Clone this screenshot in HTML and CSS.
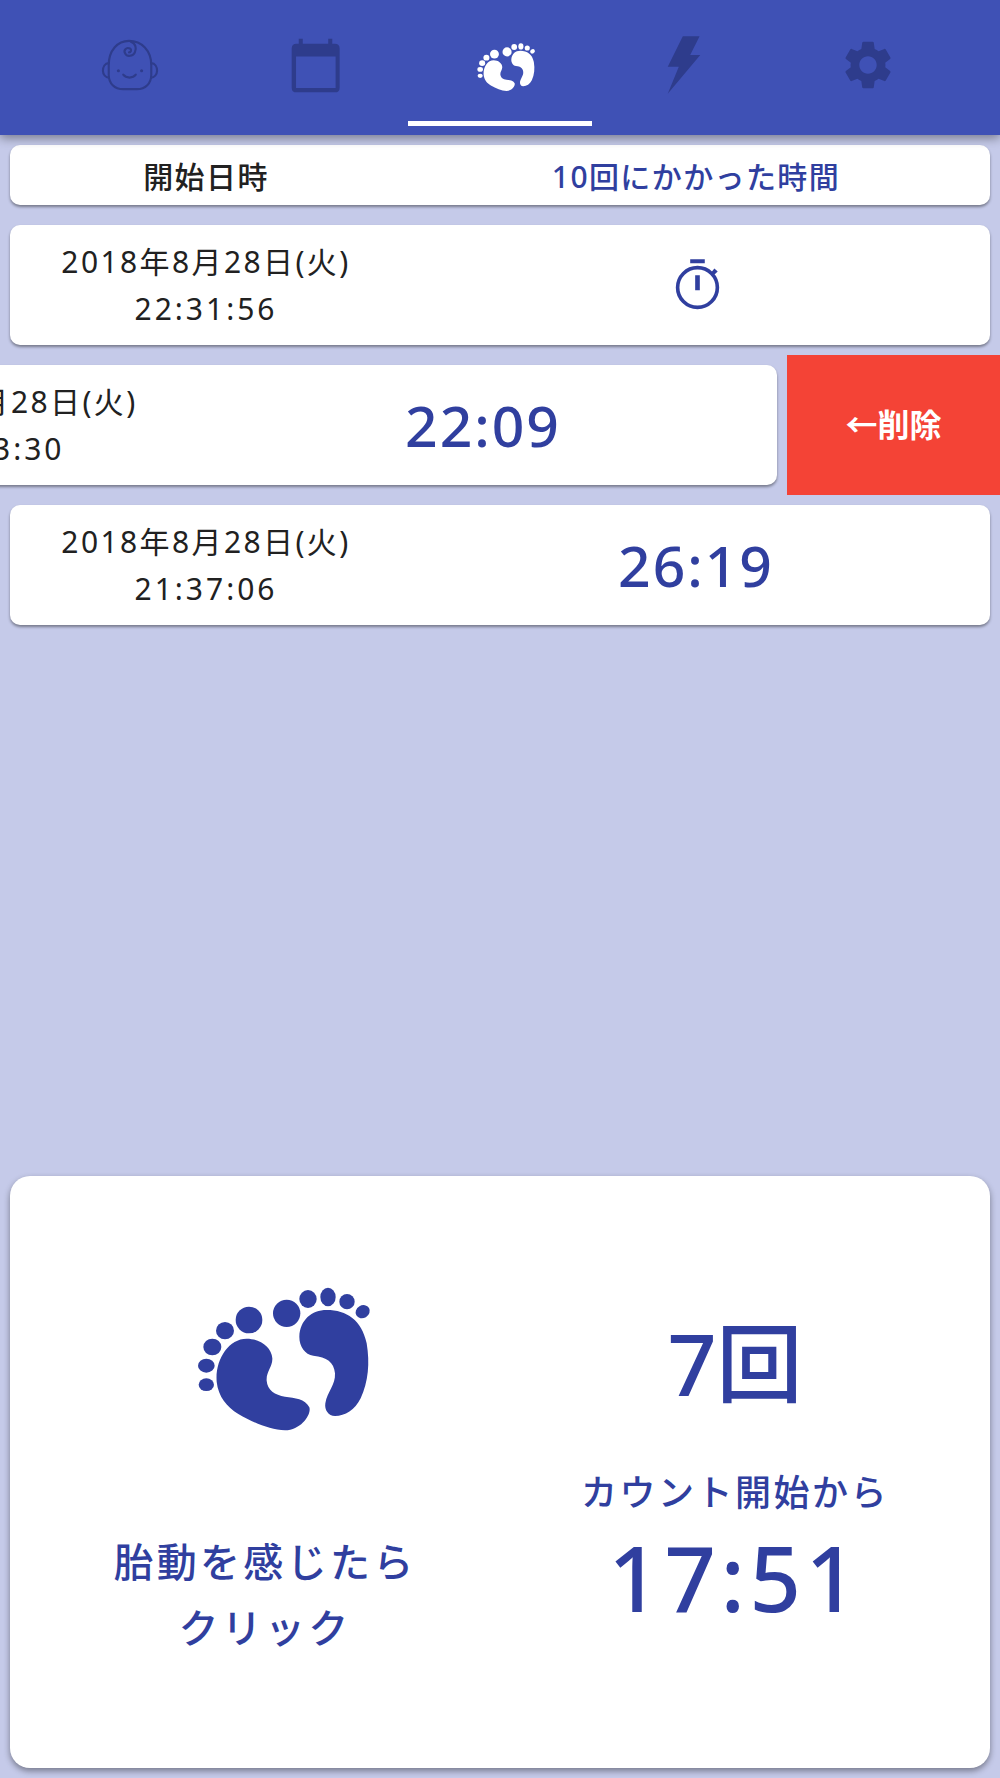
FILE: index.html
```html
<!DOCTYPE html>
<html lang="ja">

<head>
  <meta charset="UTF-8">
  <meta name="viewport" content="width=device-width, initial-scale=1.0">
  <title>胎動カウント</title>
  <link rel="stylesheet" href="styles.css">
</head>

<body>
  <svg class="defs" width="0" height="0">
    <symbol id="feet" viewBox="0 0 690 600">
      <path d="M230 236C270 236 305 262 307 295C308 320 288 335 290 362C292 390 315 405 345 410C375 415 405 415 418 442C425 462 395 510 345 511C300 510 250 488 205 462C170 440 145 410 140 365C135 300 175 236 230 236Z" />
      <path d="M470 150C530 150 575 180 590 250C600 310 595 365 572 415C555 450 525 468 495 468C475 468 463 450 466 430C472 395 497 375 495 340C492 305 470 292 430 287C405 283 388 260 388 230C390 180 425 150 470 150Z" />
      <circle cx="237" cy="180" r="40" />
      <ellipse cx="165" cy="212" rx="27" ry="26" />
      <ellipse cx="127" cy="261" rx="27" ry="25" />
      <ellipse cx="109" cy="317" rx="25" ry="21" />
      <ellipse cx="109" cy="374" rx="23" ry="19" />
      <circle cx="350" cy="160" r="41" />
      <ellipse cx="414" cy="117" rx="26" ry="27" />
      <ellipse cx="474" cy="111" rx="23" ry="28" />
      <ellipse cx="531" cy="125" rx="23" ry="23" />
      <ellipse cx="578" cy="155" rx="22" ry="19" transform="rotate(-30 578 155)" />
    </symbol>
  </svg>

  <div class="app">
    <nav class="tabs">
      <div class="tab">
        <svg class="icon-baby" viewBox="0 0 60 60" fill="none" stroke="currentColor" stroke-width="2.2" stroke-linecap="round">
          <path d="M29 5C42 5 52 15 52 30V40C52 49 46 55 37 55H23C14 55 8 49 8 40V30C8 15 17 5 29 5Z" />
          <path d="M8 28C4 28 2 32 2 36C2 40 5 43 8 43" />
          <path d="M52 28C56 28 58 32 58 36C58 40 55 43 52 43" />
          <path d="M31 6C36 8 37 13 35 17C33 21 27 22 25 18C23 15 26 11 30 13C32 14 31 17 29 17" />
          <path d="M23 40C26 44 33 44 36 40" />
          <circle cx="18" cy="36" r="1.6" fill="currentColor" stroke="none" />
          <circle cx="42" cy="36" r="1.6" fill="currentColor" stroke="none" />
        </svg>
      </div>
      <div class="tab">
        <svg class="icon-calendar" viewBox="630 50 155 170" fill="currentColor">
          <path fill-rule="evenodd" d="M656 55H668V70H744V55H756V70H764Q778 70 778 84V201Q778 215 764 215H649Q635 215 635 201V84Q635 70 649 70H656ZM648 108V202H766V108Z" />
        </svg>
      </div>
      <div class="tab active">
        <svg class="icon-feet" fill="currentColor"><use href="#feet" /></svg>
      </div>
      <div class="tab">
        <svg class="icon-bolt" viewBox="650 40 110 185" fill="currentColor">
          <path d="M700 47H750L722 103H752L655 218L688 138H655Z" />
        </svg>
      </div>
      <div class="tab">
        <svg class="icon-gear" viewBox="0 0 24 24" fill="currentColor">
          <path d="M19.14 12.94c.04-.3.06-.61.06-.94 0-.32-.02-.64-.07-.94l2.03-1.58c.18-.14.23-.41.12-.61l-1.92-3.32c-.12-.22-.37-.29-.59-.22l-2.39.96c-.5-.38-1.03-.7-1.62-.94l-.36-2.54c-.04-.24-.24-.41-.48-.41h-3.84c-.24 0-.43.17-.47.41l-.36 2.54c-.59.24-1.13.57-1.62.94l-2.39-.96c-.22-.08-.47 0-.59.22L2.74 8.87c-.12.21-.08.47.12.61l2.03 1.58c-.05.3-.09.63-.09.94s.02.64.07.94l-2.03 1.58c-.18.14-.23.41-.12.61l1.92 3.32c.12.22.37.29.59.22l2.39-.96c.5.38 1.03.7 1.62.94l.36 2.54c.05.24.24.41.48.41h3.84c.24 0 .44-.17.47-.41l.36-2.54c.59-.24 1.13-.56 1.62-.94l2.39.96c.22.08.47 0 .59-.22l1.92-3.32c.12-.22.07-.47-.12-.61l-2.01-1.58zM12 15.6c-1.98 0-3.6-1.62-3.6-3.6s1.62-3.6 3.6-3.6 3.6 1.62 3.6 3.6-1.62 3.6-3.6 3.6z" />
        </svg>
      </div>
    </nav>

    <main class="list">
      <div class="row">
        <div class="card card-head">
          <div class="col-date head-start">開始日時</div>
          <div class="col-time head-time">10回にかかった時間</div>
        </div>
      </div>

      <div class="row">
        <div class="card card-item">
          <div class="col-date date">2018年8月28日(火)<br><span class="clock">22:31:56</span></div>
          <div class="col-time time">
            <svg class="icon-timer" viewBox="95 50 140 160">
              <path class="timer-fill" d="M146 57H190V69H146ZM161 105H175V150H161ZM208 98L219 85L229 94L216 106Z" />
              <circle class="timer-ring" cx="168" cy="142" r="60" />
            </svg>
          </div>
        </div>
      </div>

      <div class="row swiped">
        <div class="delete">←削除</div>
        <div class="card card-item">
          <div class="col-date date">2018年8月28日(火)<br><span class="clock">22:03:30</span></div>
          <div class="col-time time">22:09</div>
        </div>
      </div>

      <div class="row">
        <div class="card card-item">
          <div class="col-date date">2018年8月28日(火)<br><span class="clock">21:37:06</span></div>
          <div class="col-time time">26:19</div>
        </div>
      </div>
    </main>

    <section class="counter">
      <div class="counter-left">
        <svg class="icon-feet-big" fill="currentColor"><use href="#feet" /></svg>
        <p class="counter-label">胎動を感じたら<br>クリック</p>
      </div>
      <div class="counter-right">
        <div class="count">7回</div>
        <div class="since">カウント開始から</div>
        <div class="elapsed">17:51</div>
      </div>
    </section>
  </div>
</body>

</html>
```

FILE: styles.css
```css
body {
  margin: 0;
  background-color: #c5cae9;
  font-family: "Noto Sans", "Noto Sans CJK JP", sans-serif;
  font-weight: 500;
  color: #212121;
}

.defs {
  position: absolute;
}

.app {
  display: flex;
  flex-direction: column;
  height: 100vh;
  overflow: hidden;
}

.tabs {
  display: flex;
  flex: 0 0 auto;
  position: relative;
  z-index: 1;
  height: 135px;
  padding: 0 40px;
  background-color: #3f51b5;
  box-shadow: 0 3px 10px rgba(0, 0, 0, 0.4);
  color: #2e3c8c;
}

.tab {
  flex: 1;
  display: flex;
  align-items: center;
  justify-content: center;
  height: 130px;
  box-sizing: border-box;
}

.tab.active {
  color: #fff;
  height: 126px;
  border-bottom: 5px solid #fff;
}

.icon-baby {
  width: 58px;
  height: 60px;
  margin-right: 4px;
}

.icon-calendar {
  width: 52px;
  height: 57px;
}

.icon-feet {
  width: 77px;
  height: 67px;
  margin: 14px 0 0 12px;
}

.icon-bolt {
  width: 37px;
  height: 62px;
}

.icon-gear {
  width: 58px;
  height: 58px;
}

.list {
  flex: 1;
}

.row {
  padding: 10px;
  position: relative;
}

.card {
  display: flex;
  align-items: center;
  background-color: #fff;
  border-radius: 10px;
  box-shadow: 0 2px 3px rgba(0, 0, 0, 0.4);
}

.col-date {
  flex: 0 0 40%;
  text-align: center;
}

.col-time {
  flex: 0 0 60%;
  text-align: center;
}

.card-head {
  height: 60px;
  font-size: 30px;
  letter-spacing: 1.4px;
}

.head-time {
  color: #303f9f;
}

.card-item {
  height: 120px;
}

.date {
  font-size: 30px;
  font-weight: 400;
  line-height: 47px;
  letter-spacing: 2.4px;
}

.clock {
  letter-spacing: 3px;
}

.time {
  color: #303f9f;
  font-size: 57px;
  letter-spacing: 2px;
}

.icon-timer {
  display: block;
  width: 47px;
  height: 53px;
  margin: -4px auto 0;
}

.timer-fill {
  fill: #303f9f;
}

.timer-ring {
  fill: none;
  stroke: #303f9f;
  stroke-width: 11;
}

.swiped {
  overflow: hidden;
}

.swiped .card {
  transform: translateX(-213px);
}

.delete {
  position: absolute;
  top: 0;
  right: 0;
  bottom: 0;
  width: 213px;
  padding-bottom: 4px;
  box-sizing: border-box;
  display: flex;
  align-items: center;
  justify-content: center;
  background-color: #f44336;
  color: #fff;
  font-size: 32px;
  font-weight: 700;
}

.counter {
  flex: 0 0 auto;
  display: flex;
  height: 592px;
  margin: 0 10px 10px;
  padding: 0 20px;
  background-color: #fff;
  border-radius: 20px;
  box-shadow: 0 3px 6px rgba(0, 0, 0, 0.4);
  color: #303f9f;
}

.counter-left {
  flex: 1;
  padding-top: 84px;
  text-align: center;
}

.icon-feet-big {
  display: block;
  width: 230px;
  height: 200px;
  margin-left: 140px;
}

.counter-label {
  margin: 69px 0 0;
  font-size: 40px;
  line-height: 66px;
  letter-spacing: 3.3px;
}

.counter-right {
  flex: 1;
  padding-top: 132px;
  text-align: center;
}

.count {
  font-size: 86px;
  line-height: 110px;
}

.since {
  margin-top: 50px;
  font-size: 36px;
  line-height: 50px;
  letter-spacing: 2.5px;
}

.elapsed {
  margin-top: 4px;
  font-size: 90px;
  line-height: 110px;
  letter-spacing: 4.6px;
}
```
